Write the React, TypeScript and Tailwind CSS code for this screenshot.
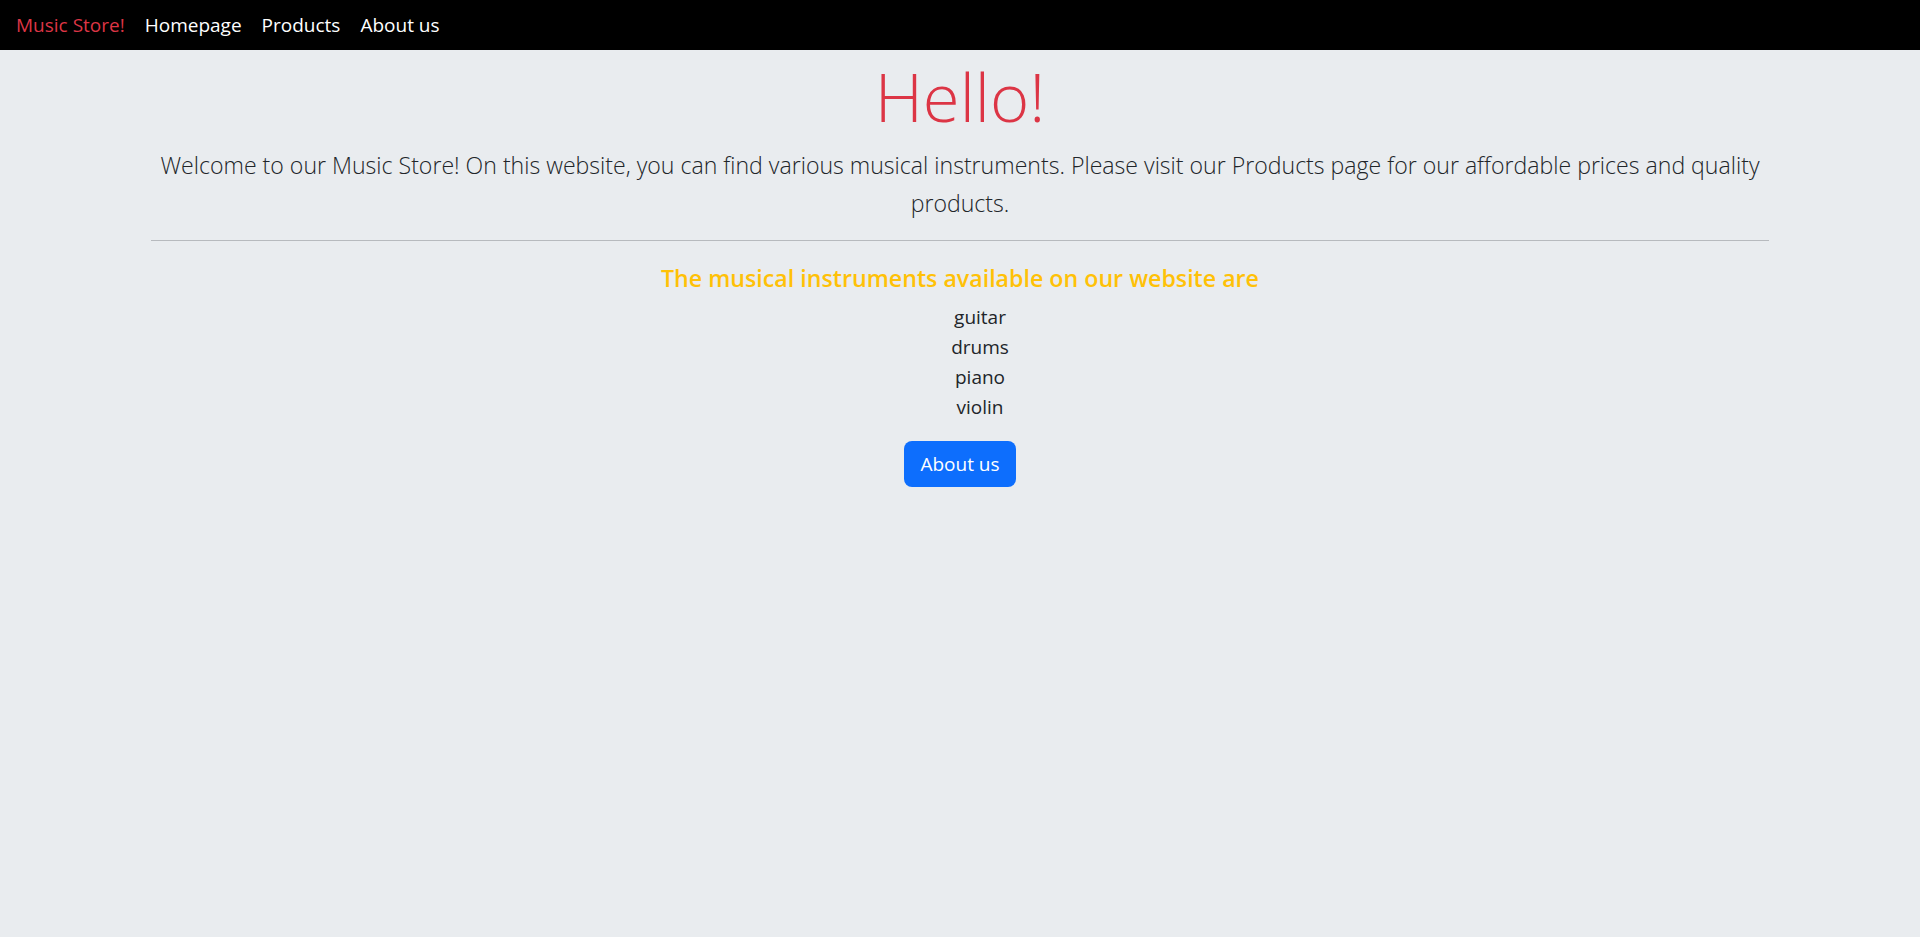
const instruments = ["guitar", "drums", "piano", "violin"];

export default function App() {
  return (
    <div className="min-h-[937px] bg-[#e9ecef] font-['Open_Sans',_'Noto_Sans',_sans-serif] text-[#212529]">
      <nav className="flex h-[50px] items-center gap-[20px] bg-black px-4 text-[19px]">
        <span className="text-[#dc3545]">Music Store!</span>
        <a className="text-white">Homepage</a>
        <a className="text-white">Products</a>
        <a className="text-white">About us</a>
      </nav>

      <main className="mx-[151px] flex flex-col items-center text-center">
        <h1 className="mt-[3px] text-[67px] font-light leading-[86px] text-[#dc3545]">Hello!</h1>
        <p className="mt-[7px] text-[23.1px] font-light leading-[38px] text-[#212529]">
          Welcome to our Music Store! On this website, you can find various musical instruments.
          Please visit our Products page for our affordable prices and quality products.
        </p>
        <hr className="mt-[18px] w-full border-t border-[#b7babe]" />
        <h4 className="mt-[20px] text-[23.2px] font-semibold leading-[34px] text-[#ffc107]">
          The musical instruments available on our website are
        </h4>
        <ul className="mt-[7px] pl-10 text-[19px] leading-[30px]">
          {instruments.map((item) => (
            <li key={item}>{item}</li>
          ))}
        </ul>
        <button className="mt-[19px] h-[46px] w-[112px] rounded-lg bg-[#0d6efd] text-[19px] text-white">
          About us
        </button>
      </main>
    </div>
  );
}
